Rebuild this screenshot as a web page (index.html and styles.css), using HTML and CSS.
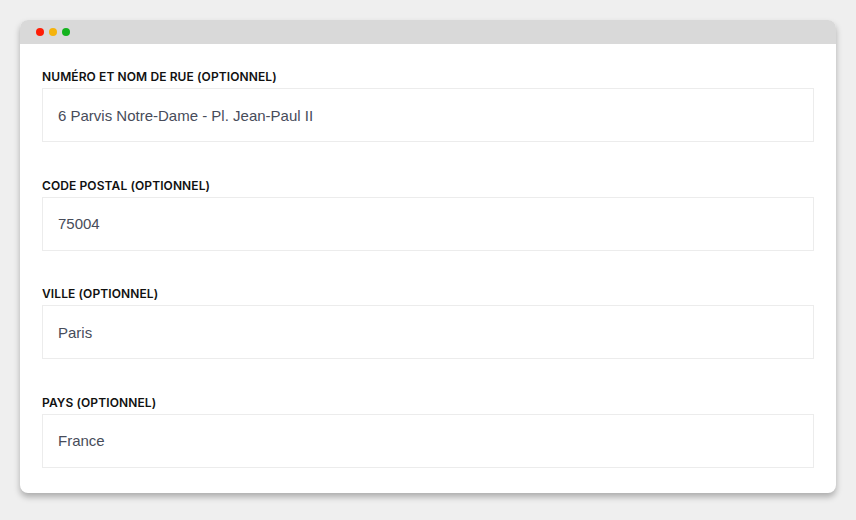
FILE: index.html
```html
<!DOCTYPE html>
<html lang="fr">
<head>
<meta charset="utf-8">
<link rel="stylesheet" href="styles.css">
</head>
<body>
<div class="window">
  <div class="titlebar">
    <span class="dot red"></span>
    <span class="dot yellow"></span>
    <span class="dot green"></span>
  </div>
  <div class="content">
    <div class="field">
      <label class="label">Numéro et nom de rue (optionnel)</label>
      <div class="input">6 Parvis Notre-Dame - Pl. Jean-Paul II</div>
    </div>
    <div class="field">
      <label class="label">Code postal (optionnel)</label>
      <div class="input">75004</div>
    </div>
    <div class="field">
      <label class="label">Ville (optionnel)</label>
      <div class="input">Paris</div>
    </div>
    <div class="field">
      <label class="label">Pays (optionnel)</label>
      <div class="input">France</div>
    </div>
  </div>
</div>
</body>
</html>
```
FILE: styles.css
```css
html, body {
  margin: 0;
  padding: 0;
  background: #efefef;
}
body {
  padding: 20px;
  width: 816px;
}
.window {
  background: #fff;
  border-radius: 8px;
  overflow: hidden;
  box-shadow: 0 4px 6px rgba(0,0,0,0.28);
}
.titlebar {
  height: 24px;
  background: #d9d9d9;
  display: flex;
  align-items: center;
  gap: 5px;
  padding-left: 16px;
}
.dot {
  width: 8px;
  height: 8px;
  border-radius: 50%;
}
.red { background: #fe1d06; }
.yellow { background: #f5b30c; }
.green { background: #14b31e; }
.content {
  padding: 25px 22px 25px;
  display: flex;
  flex-direction: column;
  gap: 35.67px;
}
.field {
  display: flex;
  flex-direction: column;
  gap: 3px;
}
.label {
  font-family: Inter, "Noto Sans", sans-serif;
  font-size: 12px;
  font-weight: 600;
  line-height: 16px;
  text-transform: uppercase;
  color: #111;
  letter-spacing: 0.1px;
}
.input {
  height: 52px;
  border: 1px solid #ececec;
  box-sizing: content-box;
  padding: 0 15px;
  display: flex;
  align-items: center;
  font-family: "Liberation Sans", Arial, sans-serif;
  font-size: 15px;
  color: #474c5a;
}
```
